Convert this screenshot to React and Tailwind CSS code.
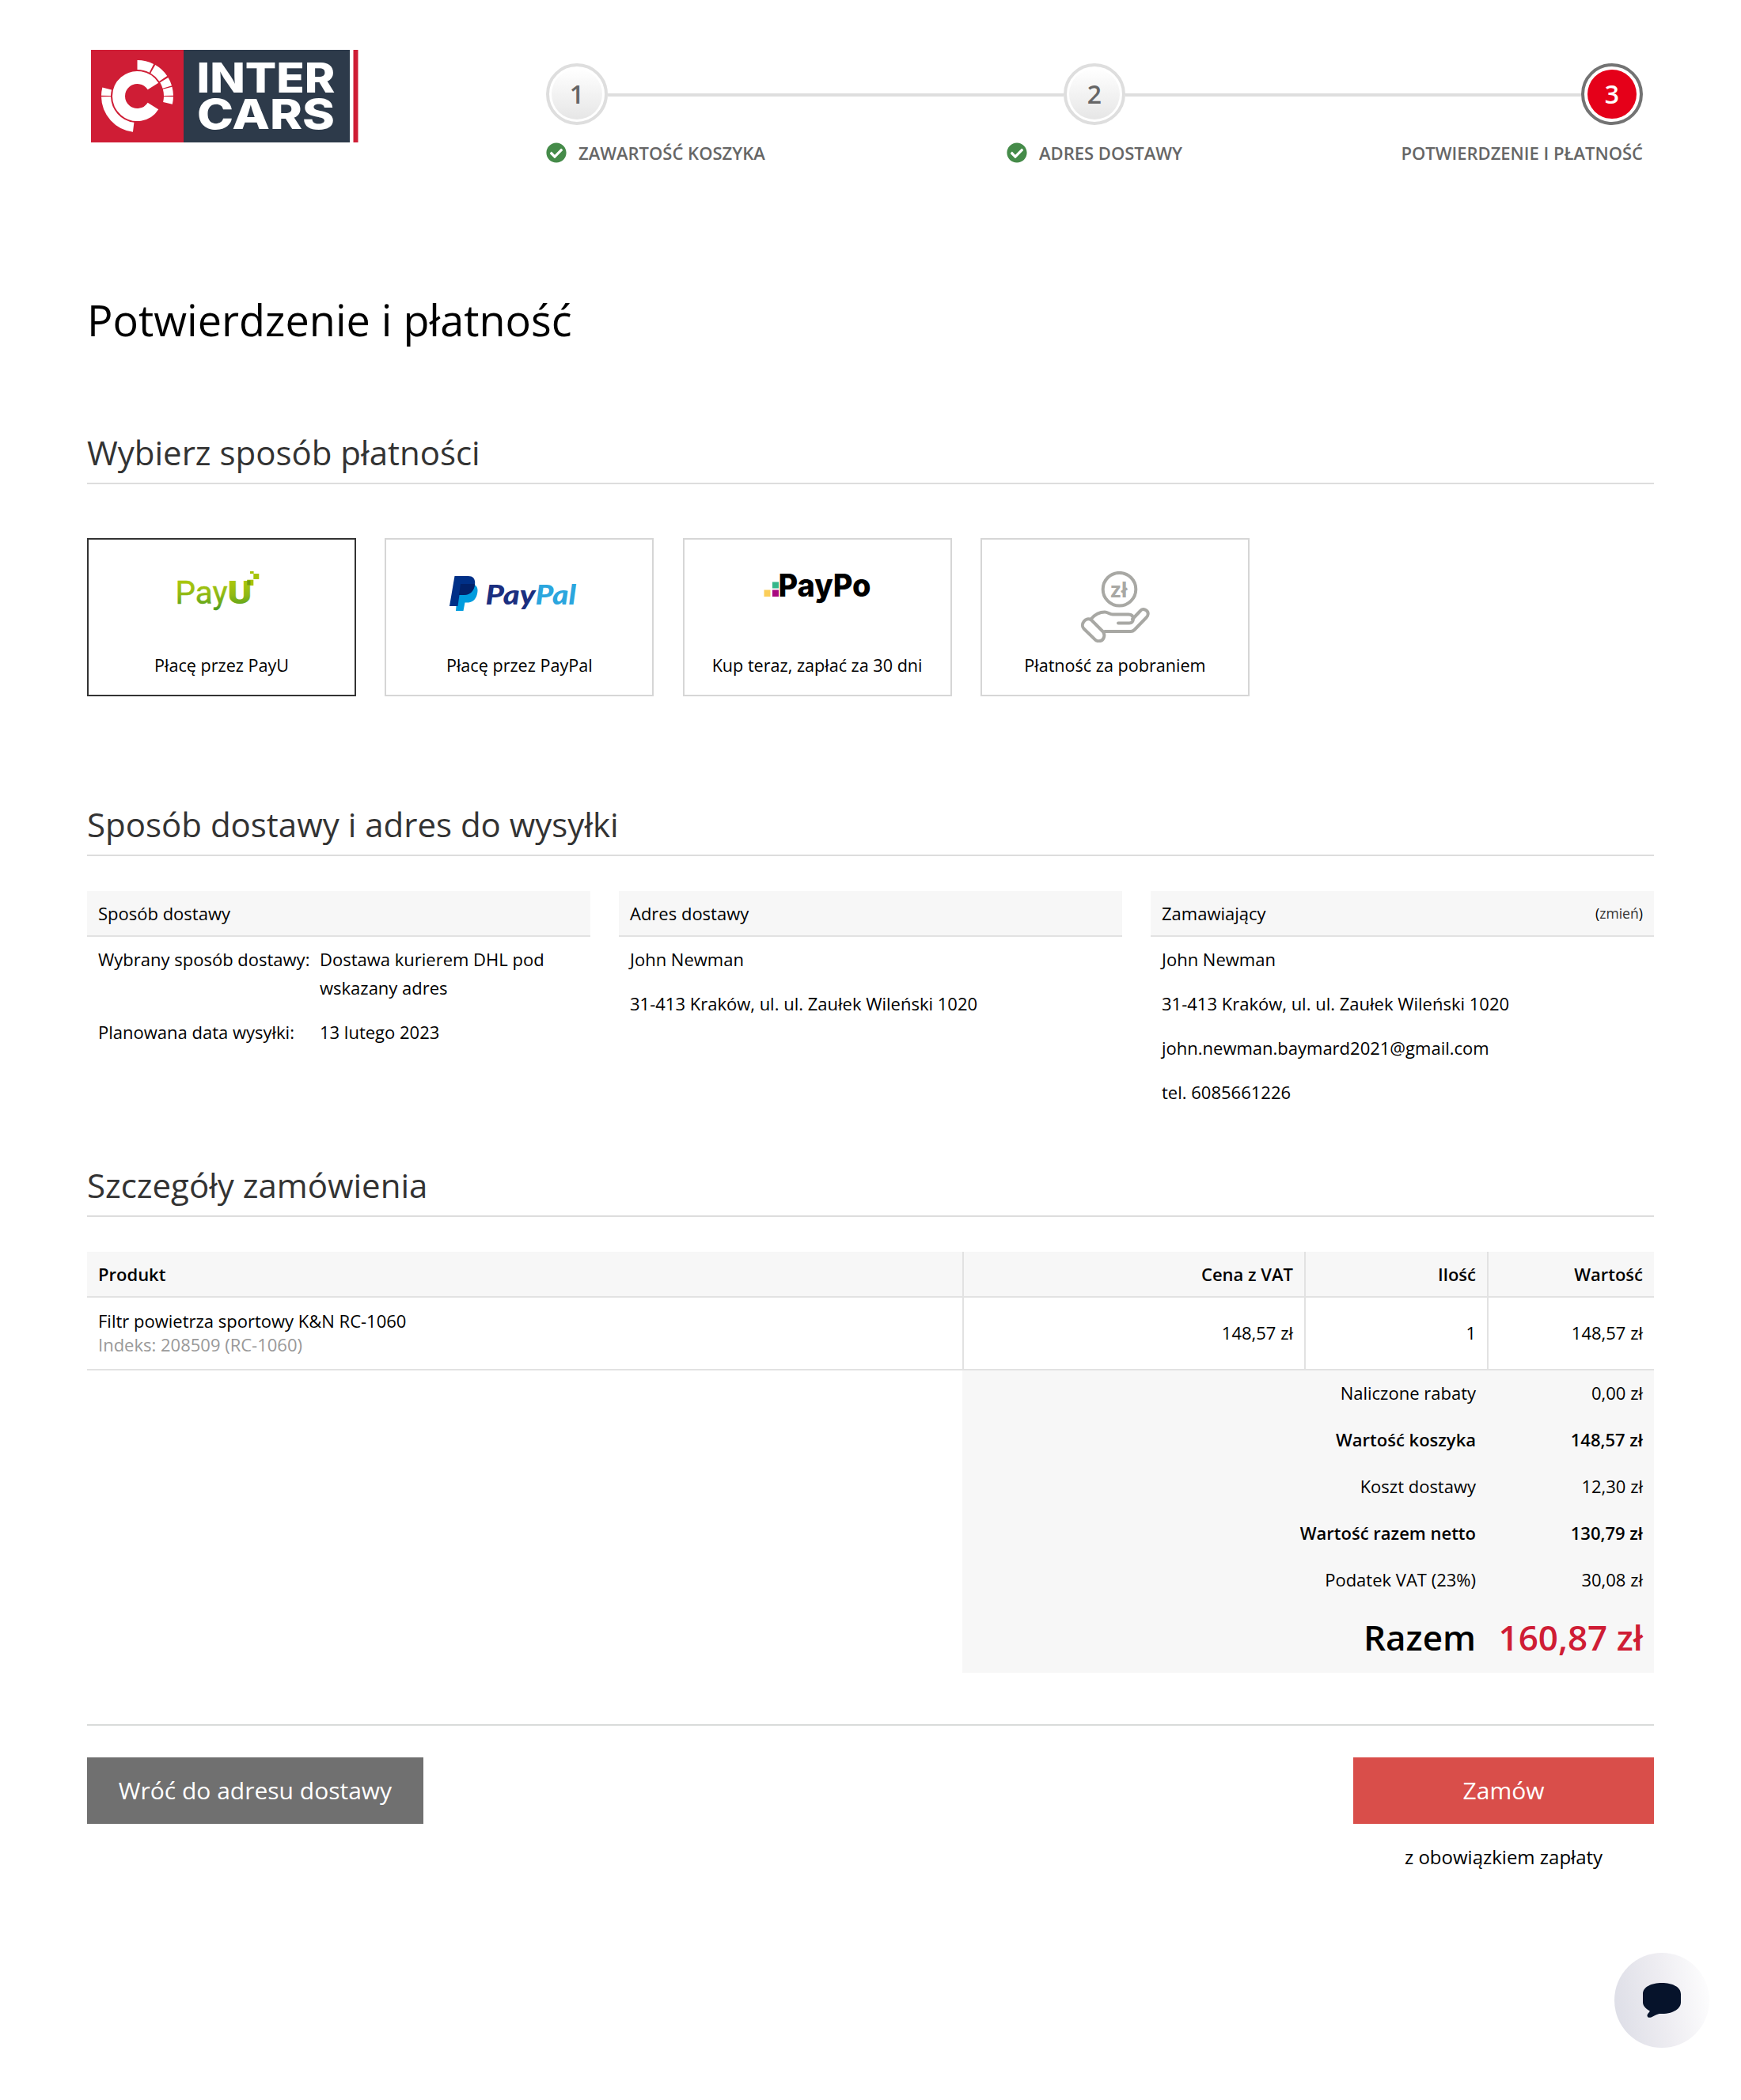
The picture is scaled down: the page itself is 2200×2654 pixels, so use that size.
import React from "react";
import { FaCheckCircle } from "react-icons/fa";

const EMBLEM = { cx: 58.5, cy: 58.5 };

function point(r, deg) {
  const a = (deg * Math.PI) / 180;
  return [EMBLEM.cx + r * Math.cos(a), EMBLEM.cy + r * Math.sin(a)];
}

function arc(r, from, to) {
  const [x1, y1] = point(r, from);
  const [x2, y2] = point(r, to);
  const large = to - from > 180 ? 1 : 0;
  return `M${x1} ${y1}A${r} ${r} 0 ${large} 1 ${x2} ${y2}`;
}

function InterCarsLogo() {
  return (
    <svg width="338" height="117" viewBox="0 0 338 117" className="block" role="img" aria-label="Inter Cars">
      <rect width="117" height="117" fill="#cf1d35" />
      <rect x="117" width="210" height="117" fill="#2d3a4a" />
      <rect x="331.5" width="6" height="117" fill="#cf1d35" />
      <g fill="none" stroke="#fff">
        <path d={arc(23.5, 32, 328)} strokeWidth="16" />
        <g strokeWidth="12">
          <path d={arc(39.5, -90, -63)} />
          <path d={arc(39.5, -60, -34)} />
          <path d={arc(39.5, -31, -17)} />
          <path d={arc(39.5, -15, -1)} />
          <path d={arc(39.5, 1, 13)} />
          <path d={arc(39.5, 97, 179)} />
          <path d={arc(39.5, 181, 194)} />
        </g>
      </g>
      <g fill="#fff" fontFamily="Inter, sans-serif" fontWeight="800" fontSize="51.8">
        <text x="133.5" y="53.800" textLength="175" lengthAdjust="spacingAndGlyphs">INTER</text>
        <text x="134" y="100.300" textLength="174" lengthAdjust="spacingAndGlyphs">CARS</text>
      </g>
    </svg>
  );
}

function PayULogo() {
  return (
    <svg width="104" height="52" viewBox="0 0 104 52" className="block overflow-visible" role="img" aria-label="PayU">
      <defs>
        <linearGradient id="payu" gradientUnits="userSpaceOnUse" x1="0" y1="8" x2="0" y2="52">
          <stop offset="0" stopColor="#b0ca0a" />
          <stop offset="0.5" stopColor="#8fb914" />
          <stop offset="1" stopColor="#3f961f" />
        </linearGradient>
      </defs>
      <g fill="url(#payu)">
        <text x="-2.500" y="41.300" fontFamily="Roboto, sans-serif" fontSize="41.500" textLength="66" lengthAdjust="spacingAndGlyphs" stroke="url(#payu)" strokeWidth="0.500" strokeLinejoin="round">Pay</text>
        <text x="63.500" y="41.300" fontFamily="Roboto, sans-serif" fontWeight="900" fontSize="41.500" textLength="31" lengthAdjust="spacingAndGlyphs">U</text>
      </g>
      <rect x="88.300" y="10.700" width="8" height="7.300" fill="#a6c307" />
      <rect x="88.300" y="11.500" width="4.200" height="6" fill="#6f9c12" />
      <rect x="92" y="0" width="4.600" height="3" fill="#a6c307" />
      <rect x="96.300" y="3" width="7" height="7" fill="#a6c307" />
    </svg>
  );
}

function PayPalLogo() {
  return (
    <svg width="164" height="52" viewBox="0 0 164 52" className="block overflow-visible" role="img" aria-label="PayPal">
      <path d="M13 16h16c8 0 9.500 6 8 12.500C35 37 30 39.500 24 39.500h-2.500L19.500 50H10z" fill="#009cde" />
      <path d="M8.500 6h17c7 0 9.500 4.500 8.500 11-1.500 9-6.500 13-15 13h-4.500L12.500 44H2z" fill="#003087" />
      <path d="M16 16h18.200C33 25.500 28 30 19 30h-5z" fill="#012169" />
      <g fontFamily="Lato, sans-serif" fontWeight="900" fontStyle="italic" fontSize="34">
        <text x="47.500" y="41.500" textLength="63" lengthAdjust="spacingAndGlyphs" fill="#1b2f80">Pay</text>
        <text x="110.500" y="41.500" textLength="51.500" lengthAdjust="spacingAndGlyphs" fill="#2ba6de">Pal</text>
      </g>
    </svg>
  );
}

function PayPoLogo() {
  return (
    <svg width="138" height="44" viewBox="0 0 138 44" className="block overflow-visible" role="img" aria-label="PayPo">
      <rect x="1.500" y="23.500" width="8" height="8.500" fill="#fbce5a" />
      <rect x="12" y="13.500" width="8" height="8" fill="#35b78a" />
      <rect x="12" y="23.500" width="8" height="8.500" fill="#a8087f" />
      <text x="19.500" y="32" textLength="117" lengthAdjust="spacingAndGlyphs" fill="#000" fontFamily="Inter, sans-serif" fontWeight="800" fontSize="39.500">PayPo</text>
    </svg>
  );
}

function CashOnDeliveryIcon() {
  return (
    <svg width="88" height="90" viewBox="0 0 88 90" className="block" fill="none" stroke="#a8a8a4" strokeWidth="4" strokeLinecap="round" strokeLinejoin="round">
      <circle cx="49.500" cy="22.700" r="20.800" />
      <text x="49" y="33" textAnchor="middle" fill="#a8a8a4" stroke="none" fontFamily="Open Sans, sans-serif" fontWeight="700" fontSize="27">zł</text>
      <path d="M14 60C20 53 25 51.500 31 51.500c4 0 6 3 10 3h20c4 0 6 2 6 5.500 0 3.500-2 5.500-5 5.500H48" />
      <path d="M66 60.500 76 50c3-4 10-1 9.700 4-.1 2-1.200 3.500-2.200 4.500L68.500 74c-1.500 1.500-2.500 2-4.500 2H31" />
      <path d="M14 61.500 28.500 76c4 5 1 12.500-5.500 12.200-1.800-.1-3-.7-4.200-1.900L4.500 72.500C-.5 67 7 57 14 61.500z" />
    </svg>
  );
}

function Step({ number, active }) {
  return active ? (
    <div className="flex size-[78px] shrink-0 items-center justify-center rounded-full border-4 border-[#737373] bg-white">
      <div className="flex size-[62px] items-center justify-center rounded-full bg-[#e50019] text-[32px] font-semibold text-white">{number}</div>
    </div>
  ) : (
    <div className="flex size-[78px] shrink-0 items-center justify-center rounded-full border-4 border-[#dedede] bg-white">
      <div className="flex size-[64px] items-center justify-center rounded-full bg-linear-to-b from-white to-[#e6e6e6] text-[32px] font-semibold text-[#666]">{number}</div>
    </div>
  );
}

function StepLabel({ children, done }) {
  return (
    <div className="flex items-center gap-[15px]">
      {done && <FaCheckCircle className="size-[26px] text-[#458b49]" />}
      <span>{children}</span>
    </div>
  );
}

function SectionTitle({ children }) {
  return <h2 className="border-b-2 border-[#ddd] pb-[10px] text-[42px] leading-[56px] text-[#333]">{children}</h2>;
}

function PaymentCard({ logo, label, selected }) {
  return (
    <div className={`flex h-[200px] w-[340px] flex-col items-center border-2 pt-10 ${selected ? "border-[#333]" : "border-[#d6d6d6]"}`}>
      <div className="flex h-[101px] items-start">{logo}</div>
      <div className="text-[21.6px] leading-[36px]">{label}</div>
    </div>
  );
}

function InfoColumn({ title, action, children }) {
  return (
    <div className="w-[636px]">
      <div className="flex h-[58px] items-center justify-between border-b-2 border-[#e2e2e2] bg-[#f7f7f7] px-[14px]">
        <span>{title}</span>
        {action}
      </div>
      <div className="px-[14px] leading-[36px]">{children}</div>
    </div>
  );
}

const totals = [
  { label: "Naliczone rabaty", value: "0,00 zł" },
  { label: "Wartość koszyka", value: "148,57 zł", bold: true },
  { label: "Koszt dostawy", value: "12,30 zł" },
  { label: "Wartość razem netto", value: "130,79 zł", bold: true },
  { label: "Podatek VAT (23%)", value: "30,08 zł" },
];

export default function App() {
  return (
    <div className="relative h-[2654px] w-[2200px] overflow-hidden bg-white px-[110px] font-['Open_Sans',sans-serif] text-[22px] leading-[30px] text-black">
      <header className="flex h-[368px] justify-between pr-[14px] pl-[5px] pt-[62px]">
        <div className="pt-px">
          <InterCarsLogo />
        </div>
        <div className="w-[1386px] pt-[18px]">
          <div className="flex items-center">
            <Step number="1" />
            <div className="mt-0.5 h-1 flex-1 bg-[#dedede]" />
            <Step number="2" />
            <div className="mt-0.5 h-1 flex-1 bg-[#dedede]" />
            <Step number="3" active />
          </div>
          <div className="mt-5 grid grid-cols-[582px_1fr_auto] font-semibold text-[#666]">
            <StepLabel done>ZAWARTOŚĆ KOSZYKA</StepLabel>
            <StepLabel done>ADRES DOSTAWY</StepLabel>
            <StepLabel>POTWIERDZENIE I PŁATNOŚĆ</StepLabel>
          </div>
        </div>
      </header>

      <h1 className="text-[54px] leading-[72px]">Potwierdzenie i płatność</h1>

      <section className="mt-[104px]">
        <SectionTitle>Wybierz sposób płatności</SectionTitle>
        <div className="mt-[68px] flex gap-[36.3px]">
          <PaymentCard selected label="Płacę przez PayU" logo={<div className="-ml-2"><PayULogo /></div>} />
          <PaymentCard label="Płacę przez PayPal" logo={<div className="-ml-4"><PayPalLogo /></div>} />
          <PaymentCard label="Kup teraz, zapłać za 30 dni" logo={<PayPoLogo />} />
          <PaymentCard label="Płatność za pobraniem" logo={<CashOnDeliveryIcon />} />
        </div>
      </section>

      <section className="mt-[134px] h-[456px]">
        <SectionTitle>Sposób dostawy i adres do wysyłki</SectionTitle>
        <div className="mt-11 flex justify-between">
          <InfoColumn title="Sposób dostawy">
            <div className="grid grid-cols-[280px_1fr]">
              <div className="py-[10px]">Wybrany sposób dostawy:</div>
              <div className="py-[10px] pr-10">Dostawa kurierem DHL pod wskazany adres</div>
              <div className="py-[10px]">Planowana data wysyłki:</div>
              <div className="py-[10px]">13 lutego 2023</div>
            </div>
          </InfoColumn>
          <InfoColumn title="Adres dostawy">
            <div className="py-[10px]">John Newman</div>
            <div className="py-[10px]">31-413 Kraków, ul. ul. Zaułek Wileński 1020</div>
          </InfoColumn>
          <InfoColumn title="Zamawiający" action={<span className="text-[17.6px]">(<span className="text-[#333]">zmień</span>)</span>}>
            <div className="py-[10px]">John Newman</div>
            <div className="py-[10px]">31-413 Kraków, ul. ul. Zaułek Wileński 1020</div>
            <div className="py-[10px]">john.newman.baymard2021@gmail.com</div>
            <div className="py-[10px]">tel. 6085661226</div>
          </InfoColumn>
        </div>
      </section>

      <section>
        <SectionTitle>Szczegóły zamówienia</SectionTitle>
        <div className="mt-11 grid h-[58px] grid-cols-[1106px_432px_231px_211px] border-b-2 border-[#e2e2e2] bg-[#f7f7f7] font-semibold leading-[56px]">
          <div className="px-[14px]">Produkt</div>
          <div className="border-l-2 border-[#e2e2e2] px-[14px] text-right">Cena z VAT</div>
          <div className="border-l-2 border-[#e2e2e2] px-[14px] text-right">Ilość</div>
          <div className="border-l-2 border-[#e2e2e2] px-[14px] text-right">Wartość</div>
        </div>
        <div className="grid h-[92px] grid-cols-[1106px_432px_231px_211px] border-b-2 border-[#e2e2e2] leading-[88px]">
          <div className="px-[14px] pt-[14px] leading-[30px]">
            <div>Filtr powietrza sportowy K&amp;N RC-1060</div>
            <div className="text-[#999]">Indeks: 208509 (RC-1060)</div>
          </div>
          <div className="border-l-2 border-[#e2e2e2] px-[14px] text-right">148,57 zł</div>
          <div className="border-l-2 border-[#e2e2e2] px-[14px] text-right">1</div>
          <div className="border-l-2 border-[#e2e2e2] px-[14px] text-right">148,57 zł</div>
        </div>
        <div className="ml-[1106px] h-[382px] bg-[#f7f7f7] px-[14px] text-right">
          {totals.map((row) => (
            <div key={row.label} className={`grid h-[59px] grid-cols-[1fr_211px] items-center pb-[3px] ${row.bold ? "font-semibold" : ""}`}>
              <div>{row.label}</div>
              <div>{row.value}</div>
            </div>
          ))}
          <div className="grid h-[87px] grid-cols-[1fr_211px] items-center pb-[3px] text-[44px] font-semibold leading-[60px]">
            <div>Razem</div>
            <div className="text-[#cf1d35]">160,87 zł</div>
          </div>
        </div>
      </section>

      <div className="mt-[65px] flex items-start justify-between border-t-2 border-[#d9dbda] pt-10">
        <button className="h-[84px] w-[425px] bg-[#707070] text-[30px] text-white">Wróć do adresu dostawy</button>
        <div className="w-[380px] text-center">
          <button className="block h-[84px] w-full bg-[#d94e4a] text-[30px] text-white">Zamów</button>
          <div className="mt-[26px] text-[24px] leading-[32px]">z obowiązkiem zapłaty</div>
        </div>
      </div>

      <button aria-label="Czat" className="absolute right-[40px] bottom-[66px] flex size-[120px] items-center justify-center rounded-full bg-linear-[80deg,#dcdde6,#edecf1_50%,#ffffff]">
        <svg width="48" height="44" viewBox="0 0 48 44" fill="#06132b">
          <path d="M24 0C37 0 48 5 48 14v10.500C48 33 38 39 24 39c-2 0-3 0-4 .2-3 .8-6 2.600-9.500 4.200-3.500 1.500-6.200-1-4.500-4 .8-1.500 2.500-2.700 2.800-4C3 32.500 0 28.500 0 24.500V14C0 5 11 0 24 0z" />
        </svg>
      </button>
    </div>
  );
}
